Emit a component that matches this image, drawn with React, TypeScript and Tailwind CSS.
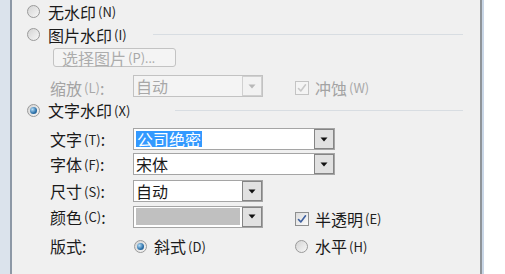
const FONT = "font-['Noto_Sans_CJK_SC','Noto_Sans_CJK_JP',sans-serif]"

function Key({ k, dim }: { k: string; dim?: boolean }) {
  return (
    <span className={`ml-[2px] text-[13px] ${dim ? 'text-[#a8a8a8]' : 'text-[#222]'}`}>({k})</span>
  )
}

function Radio({ checked }: { checked?: boolean }) {
  return (
    <span className="w-[13px] h-[13px] shrink-0 rounded-full border border-[#9a9a9a] bg-[linear-gradient(135deg,#d4d4d4,#f7f7f7)] flex items-center justify-center">
      {checked && (
        <span className="w-[7px] h-[7px] rounded-full bg-[radial-gradient(circle_at_35%_35%,#b6def8,#2a6fa8_60%,#1b4d7a)]" />
      )}
    </span>
  )
}

function Check({ checked, disabled }: { checked?: boolean; disabled?: boolean }) {
  return (
    <span
      className={`w-[14px] h-[14px] shrink-0 border flex items-center justify-center ${
        disabled ? 'border-[#c4c4c4] bg-[#f4f4f4]' : 'border-[#8e8f8f] bg-[linear-gradient(135deg,#dcdcdc,#fbfbfb)]'
      }`}
    >
      {checked && (
        <svg width="10" height="10" viewBox="0 0 10 10" fill="none">
          <path
            d="M1.5 5.5l2.3 2.4L8.5 1.8"
            stroke={disabled ? '#c8c8c8' : '#3d5f9e'}
            strokeWidth="1.6"
            strokeLinecap="round"
            strokeLinejoin="round"
          />
        </svg>
      )}
    </span>
  )
}

function Combo({ w, disabled, children }: { w: string; disabled?: boolean; children?: React.ReactNode }) {
  return (
    <div
      className={`${w} h-[22px] flex border ${
        disabled ? 'border-[#c2c2c2] bg-[#f4f4f4]' : 'border-[#a5a5a5] bg-white'
      }`}
    >
      <div className="flex-1 min-w-0 flex items-center pl-[2px]">{children}</div>
      <div
        className={`w-[20px] h-full flex items-center justify-center border ${
          disabled ? 'border-[#d0d0d0] bg-[#f2f2f2]' : 'border-[#858585] bg-[#e1e1e1]'
        }`}
      >
        <svg width="8" height="5" viewBox="0 0 8 5">
          <path d="M0.5 0.5h7L4 4.5z" fill={disabled ? '#b8b8b8' : '#111'} />
        </svg>
      </div>
    </div>
  )
}

export default function App() {
  return (
    <div className={`w-[505px] h-[274px] flex bg-white overflow-hidden ${FONT} text-[16px] leading-none text-[#1a1a1a]`}>
      <div className="w-[10px] bg-[#dbe3ec]" />
      <div className="w-[472px] bg-[#f0f0f0] border-l-2 border-r-2 border-l-[#8d98a6] border-r-[#8f9499] pl-[15px] pr-[17px] flex flex-col">
        {/* 无水印 */}
        <div className="h-[23px] flex items-center">
          <Radio />
          <span className="ml-[8px]">无水印</span>
          <Key k="N" />
        </div>

        {/* 图片水印 */}
        <div className="h-[23px] flex items-center">
          <Radio />
          <span className="ml-[8px]">图片水印</span>
          <Key k="I" />
          <div className="flex-1 ml-[26px] h-px bg-[#d8dde2]" />
        </div>

        <div className="mt-[2px] ml-[26px] w-[123px] h-[19px] border border-[#c3c3c3] rounded-[3px] bg-[#f4f4f4] flex items-center pl-[8px] text-[#acacac]">
          选择图片<Key k="P" dim /><span className="text-[12px]">...</span>
        </div>

        {/* 缩放 */}
        <div className="mt-[8px] h-[22px] flex items-center pl-[23px] text-[#a3a3a3]">
          <span className="w-[83px] flex items-center pt-[3px]">
            缩放<Key k="L" dim />:
          </span>
          <Combo w="w-[130px]" disabled>
            <span className="text-[#a8a8a8]">自动</span>
          </Combo>
          <span className="ml-[32px] flex items-center pt-[3px]">
            <Check checked disabled />
            <span className="ml-[6px]">冲蚀</span>
            <Key k="W" dim />
          </span>
        </div>

        {/* 文字水印 */}
        <div className="mt-[5px] h-[16px] flex items-center">
          <Radio checked />
          <span className="ml-[8px]">文字水印</span>
          <Key k="X" />
          <div className="flex-1 ml-[45px] h-px bg-[#d8dde2]" />
        </div>

        <div className="mt-[10px] h-[22px] flex items-center pl-[23px]">
          <span className="w-[83px] flex items-center">
            文字<Key k="T" />:
          </span>
          <Combo w="w-[202px]">
            <span className="bg-[#3399ff] text-white px-[1px]">公司绝密</span>
          </Combo>
        </div>

        <div className="mt-[3px] h-[22px] flex items-center pl-[23px]">
          <span className="w-[83px] flex items-center">
            字体<Key k="F" />:
          </span>
          <Combo w="w-[202px]">宋体</Combo>
        </div>

        <div className="mt-[5px] h-[22px] flex items-center pl-[23px]">
          <span className="w-[83px] flex items-center">
            尺寸<Key k="S" />:
          </span>
          <Combo w="w-[130px]">自动</Combo>
        </div>

        <div className="mt-[3px] h-[23px] flex items-center pl-[23px]">
          <span className="w-[83px] flex items-center">
            颜色<Key k="C" />:
          </span>
          <Combo w="w-[130px]">
            <div className="w-full mr-[2px] h-[17px] bg-[#c0c0c0]" />
          </Combo>
          <span className="ml-[32px] flex items-center pt-[4px]">
            <Check checked />
            <span className="ml-[6px]">半透明</span>
            <Key k="E" />
          </span>
        </div>

        <div className="mt-[10px] h-[16px] flex items-center pl-[23px]">
          <span className="w-[83px]">版式:</span>
          <span className="w-[162px] flex items-center pl-[1px]">
            <Radio checked />
            <span className="ml-[7px]">斜式</span>
            <Key k="D" />
          </span>
          <span className="flex items-center">
            <Radio />
            <span className="ml-[7px]">水平</span>
            <Key k="H" />
          </span>
        </div>
      </div>
      <div className="w-[2px] bg-[#c9d6e6]" />
      <div className="flex-1 bg-white" />
    </div>
  )
}
